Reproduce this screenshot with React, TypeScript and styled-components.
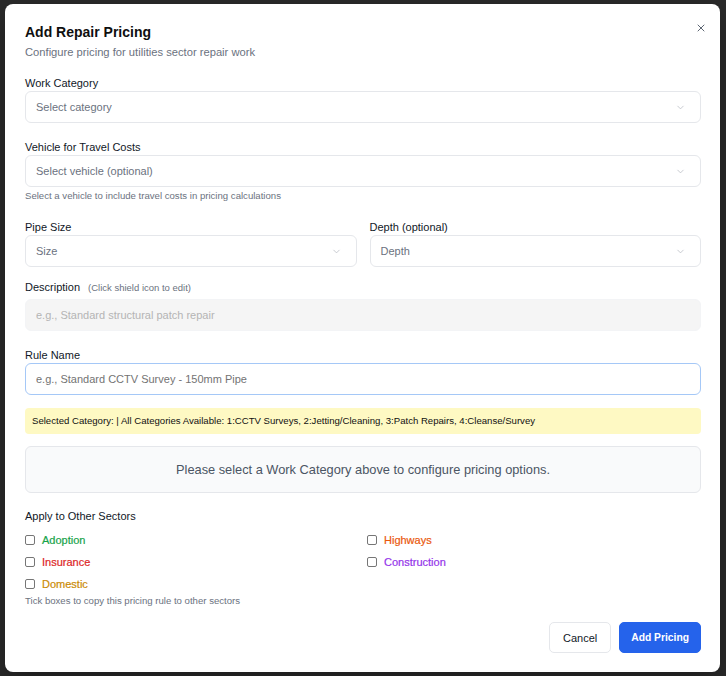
import styled, { createGlobalStyle } from 'styled-components';
import { ChevronDown, X } from 'lucide-react';

const GlobalStyle = createGlobalStyle`
  html, body {
    margin: 0;
    padding: 0;
    background: #2b2b2b;
  }
  * {
    box-sizing: border-box;
  }
`;

interface Sector {
  name: string;
  color: string;
}

const leftSectors: Sector[] = [
  { name: 'Adoption', color: '#16a34a' },
  { name: 'Insurance', color: '#dc2626' },
  { name: 'Domestic', color: '#ca8a04' },
];

const rightSectors: Sector[] = [
  { name: 'Highways', color: '#ea580c' },
  { name: 'Construction', color: '#9333ea' },
];

const SelectBox = ({ placeholder }: { placeholder: string }) => (
  <Select>
    <span>{placeholder}</span>
    <ChevronDown size={11} strokeWidth={1.6} />
  </Select>
);

const SectorCheck = ({ name, color }: Sector) => (
  <CheckRow>
    <Box type="checkbox" />
    <CheckLabel $color={color}>{name}</CheckLabel>
  </CheckRow>
);

const App = () => (
  <Page>
    <GlobalStyle />
    <Dialog>
      <Close aria-label="Close">
        <X size={12} strokeWidth={1.8} />
      </Close>
      <Title>Add Repair Pricing</Title>
      <Subtitle>Configure pricing for utilities sector repair work</Subtitle>

      <Field $mt={15}>
        <Label>Work Category</Label>
        <SelectBox placeholder="Select category" />
      </Field>

      <Field $mt={16}>
        <Label>Vehicle for Travel Costs</Label>
        <SelectBox placeholder="Select vehicle (optional)" />
        <Hint $mt={3}>Select a vehicle to include travel costs in pricing calculations</Hint>
      </Field>

      <TwoCols $mt={17}>
        <Field>
          <Label>Pipe Size</Label>
          <SelectBox placeholder="Size" />
        </Field>
        <Field>
          <Label>Depth (optional)</Label>
          <SelectBox placeholder="Depth" />
        </Field>
      </TwoCols>

      <Field $mt={12}>
        <LabelRow>
          <Label>Description</Label>
          <LabelNote>(Click shield icon to edit)</LabelNote>
        </LabelRow>
        <Input disabled placeholder="e.g., Standard structural patch repair" />
      </Field>

      <Field $mt={16}>
        <Label>Rule Name</Label>
        <Input $focused placeholder="e.g., Standard CCTV Survey - 150mm Pipe" />
      </Field>

      <Notice>
        Selected Category: | All Categories Available: 1:CCTV Surveys, 2:Jetting/Cleaning, 3:Patch
        Repairs, 4:Cleanse/Survey
      </Notice>

      <EmptyState>Please select a Work Category above to configure pricing options.</EmptyState>

      <Field $mt={15}>
        <Label>Apply to Other Sectors</Label>
        <SectorGrid>
          <SectorCol>
            {leftSectors.map((s) => (
              <SectorCheck key={s.name} {...s} />
            ))}
          </SectorCol>
          <SectorCol>
            {rightSectors.map((s) => (
              <SectorCheck key={s.name} {...s} />
            ))}
          </SectorCol>
        </SectorGrid>
        <Hint $mt={3}>Tick boxes to copy this pricing rule to other sectors</Hint>
      </Field>

      <Footer>
        <Button>Cancel</Button>
        <Button $primary>Add Pricing</Button>
      </Footer>
    </Dialog>
  </Page>
);

const Page = styled.div`
  width: 726px;
  height: 676px;
  padding: 4px 6px 4px 5px;
  font-family: 'Liberation Sans', Arial, sans-serif;
  color: #111827;
`;

const Dialog = styled.div`
  position: relative;
  display: flex;
  flex-direction: column;
  height: 668px;
  padding: 18px 19px 19px 20px;
  background: #ffffff;
  border-radius: 8px;
  box-shadow: 0 10px 30px rgba(0, 0, 0, 0.35);
`;

const Close = styled.button`
  position: absolute;
  top: 18px;
  right: 13px;
  display: flex;
  padding: 0;
  border: none;
  background: none;
  color: #4b5563;
`;

const Title = styled.h2`
  margin: 0;
  font-size: 14px;
  line-height: 20px;
  font-weight: 700;
  color: #0f0f0f;
`;

const Subtitle = styled.p`
  margin: 2px 0 0;
  font-size: 11.2px;
  line-height: 16px;
  color: #6b7280;
`;

const Field = styled.div<{ $mt?: number }>`
  display: flex;
  flex-direction: column;
  margin-top: ${(p) => p.$mt ?? 0}px;
  min-width: 0;
`;

const TwoCols = styled.div<{ $mt?: number }>`
  display: grid;
  grid-template-columns: 1fr 1fr;
  column-gap: 13px;
  margin-top: ${(p) => p.$mt ?? 0}px;
`;

const Label = styled.label`
  font-size: 11px;
  line-height: 16px;
  color: #111827;
`;

const LabelRow = styled.div`
  display: flex;
  align-items: center;
  gap: 8px;
  margin-bottom: 4px;
`;

const LabelNote = styled.span`
  font-size: 9.5px;
  color: #6b7280;
`;

const Select = styled.div`
  display: flex;
  align-items: center;
  justify-content: space-between;
  height: 32px;
  padding: 0 14px 0 10px;
  border: 1px solid #e5e7eb;
  border-radius: 6px;
  background: #ffffff;
  font-size: 11px;
  color: #6b7280;

  svg {
    color: #b5b9c0;
  }
`;

const Input = styled.input<{ $focused?: boolean }>`
  height: 32px;
  padding: 0 10px;
  border: 1px solid ${(p) => (p.$focused ? '#a5c8f7' : '#f3f4f6')};
  border-radius: 6px;
  background: ${(p) => (p.$focused ? '#ffffff' : '#f5f5f5')};
  font-family: inherit;
  font-size: 11px;
  color: #111827;
  outline: none;

  &::placeholder {
    color: #737373;
  }

  &:disabled::placeholder {
    color: #b4b4b4;
  }
`;

const Hint = styled.p<{ $mt?: number }>`
  margin: ${(p) => p.$mt ?? 0}px 0 0;
  font-size: 9.6px;
  line-height: 12px;
  color: #6b7280;
`;

const Notice = styled.div`
  margin-top: 13px;
  padding: 7px 7px;
  border-radius: 4px;
  background: #fef9c3;
  font-size: 9.6px;
  line-height: 12px;
  color: #111111;
`;

const EmptyState = styled.div`
  display: flex;
  align-items: center;
  justify-content: center;
  height: 47px;
  margin-top: 12px;
  border: 1px solid #e5e7eb;
  border-radius: 6px;
  background: #f9fafb;
  font-size: 12.8px;
  color: #4b5563;
`;

const SectorGrid = styled.div`
  display: grid;
  grid-template-columns: 1fr 1fr;
  column-gap: 8px;
  margin-top: 8px;
`;

const SectorCol = styled.div`
  display: flex;
  flex-direction: column;
  gap: 6px;
`;

const CheckRow = styled.label`
  display: flex;
  align-items: center;
  gap: 7px;
  height: 16px;
`;

const Box = styled.input`
  appearance: none;
  width: 10px;
  height: 10px;
  margin: 0;
  border: 1px solid #767676;
  border-radius: 2px;
  background: #ffffff;
`;

const CheckLabel = styled.span<{ $color: string }>`
  font-size: 11px;
  font-weight: 500;
  color: ${(p) => p.$color};
  -webkit-text-stroke: 0.2px ${(p) => p.$color};
`;

const Footer = styled.div`
  display: flex;
  justify-content: flex-end;
  gap: 8px;
  margin-top: auto;
`;

const Button = styled.button<{ $primary?: boolean }>`
  height: 31px;
  padding: 0 ${(p) => (p.$primary ? 11 : 13)}px;
  border: 1px solid ${(p) => (p.$primary ? '#2563eb' : '#e5e7eb')};
  border-radius: 5px;
  background: ${(p) => (p.$primary ? '#2563eb' : '#ffffff')};
  font-family: inherit;
  font-size: ${(p) => (p.$primary ? 10.3 : 11)}px;
  font-weight: ${(p) => (p.$primary ? 700 : 400)};
  color: ${(p) => (p.$primary ? '#ffffff' : '#111827')};
`;

export default App;
